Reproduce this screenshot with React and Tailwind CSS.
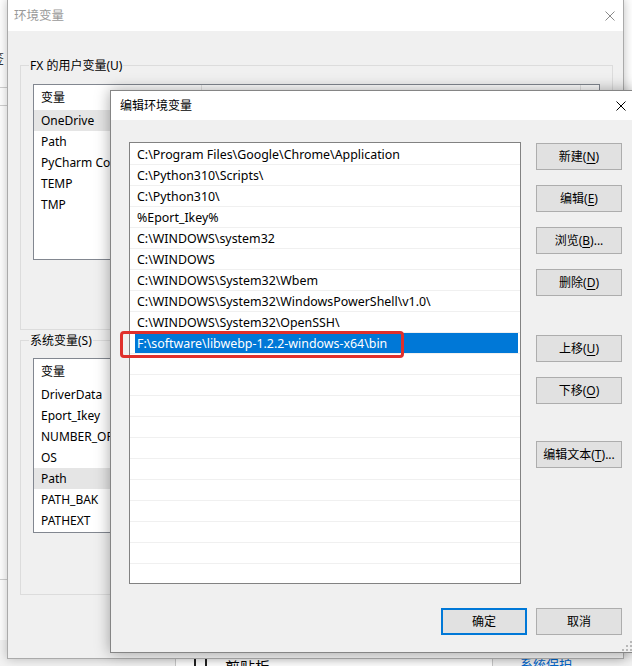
import React from 'react';

const userVars = ['OneDrive', 'Path', 'PyCharm Community Edition', 'TEMP', 'TMP'];
const sysVars = ['DriverData', 'Eport_Ikey', 'NUMBER_OF_PROCESSORS', 'OS', 'Path', 'PATH_BAK', 'PATHEXT'];
const paths = [
  'C:\\Program Files\\Google\\Chrome\\Application',
  'C:\\Python310\\Scripts\\',
  'C:\\Python310\\',
  '%Eport_Ikey%',
  'C:\\WINDOWS\\system32',
  'C:\\WINDOWS',
  'C:\\WINDOWS\\System32\\Wbem',
  'C:\\WINDOWS\\System32\\WindowsPowerShell\\v1.0\\',
  'C:\\WINDOWS\\System32\\OpenSSH\\',
];
const editing = 'F:\\software\\libwebp-1.2.2-windows-x64\\bin';

function CloseIcon({ color }) {
  return (
    <svg width="10" height="10" viewBox="0 0 10 10">
      <path d="M0.5 0.5 L9.5 9.5 M9.5 0.5 L0.5 9.5" stroke={color} strokeWidth="1" fill="none" />
    </svg>
  );
}

function VarList({ items, active, height }) {
  return (
    <div className={`ml-[12px] w-[567px] border border-[#828790] bg-white overflow-hidden ${height}`}>
      <div className="h-[25px] flex">
        <div className="w-[168px] border-r border-[#e5e5e5] pl-[7px] flex items-center">变量</div>
        <div className="w-[379px] border-r border-[#e5e5e5] pl-[7px] flex items-center">值</div>
      </div>
      {items.map((v, i) => (
        <div key={v + i} className={`h-[21px] flex ${i === active ? 'bg-[#e5e5e5]' : ''}`}>
          <div className="w-[168px] pl-[7px] flex items-center whitespace-nowrap overflow-hidden">{v}</div>
        </div>
      ))}
    </div>
  );
}

function Btn({ text, mnemonic, after = '', primary }) {
  return (
    <div
      className={`w-[86px] h-[27px] flex items-center justify-center bg-[#e1e1e1] ${
        primary ? 'border-2 border-[#0078d7]' : 'border border-[#adadad]'
      }`}
    >
      {text}
      {mnemonic && (
        <>
          (<span className="underline underline-offset-[2px]">{mnemonic}</span>){after}
        </>
      )}
    </div>
  );
}

export default function App() {
  return (
    <div className="relative w-[632px] h-[666px] overflow-hidden bg-white text-[12px] leading-[16px] text-black font-['Noto_Sans','Noto_Sans_CJK_SC',sans-serif]">
      {/* stuff behind the windows */}
      <div className="absolute left-[-9px] top-[50px] text-[13px] text-[#333]">签</div>
      <div className="absolute left-0 top-[87px] w-[7px] border-t border-[#d0d0d0]" />
      <div className="absolute left-0 top-[105px] w-[7px] border-t border-[#d0d0d0]" />
      <div className="absolute left-0 top-[579px] w-[7px] border-t border-[#d0d0d0]" />
      <div className="absolute left-0 top-[640px] w-[632px] h-[26px] bg-[#f3f3f3] flex">
        <div className="ml-[175px] w-[318px] h-full bg-white border-l border-r border-[#c8c8c8] flex items-end pl-[18px] gap-[18px]">
          <div className="w-[13px] h-[12px] border-2 border-b-0 border-[#222] mb-[-2px]" />
          <span className="text-[15px] mb-[-9px]">剪贴板</span>
        </div>
        <div className="ml-[27px] self-end mb-[-6px] text-[13px] text-[#0066cc]">系统保护</div>
      </div>

      {/* 环境变量 (inactive) */}
      <div className="absolute left-[7px] top-[-1px] w-[617px] h-[660px] border border-[#aaaaaa] bg-[#f0f0f0] shadow-[0_0_10px_rgba(0,0,0,0.25)]">
        <div className="h-[31px] bg-white flex items-center justify-between pl-[6px] pr-[8px] text-[#999999]">
          <span className="text-[12.5px]">环境变量</span>
          <CloseIcon color="#8a8a8a" />
        </div>
        <div className="pt-[26px] pl-[12px]">
          <fieldset className="w-[593px] border border-[#dcdcdc]">
            <legend className="ml-[8px] px-[1px] h-[17px] leading-[17px]">FX 的用户变量(U)</legend>
            <div className="mt-[10px] mb-[69px]">
              <VarList items={userVars} active={0} height="h-[176px]" />
            </div>
          </fieldset>
          <fieldset className="mt-[2px] w-[593px] border border-[#dcdcdc]">
            <legend className="ml-[8px] px-[1px] h-[17px] leading-[17px]">系统变量(S)</legend>
            <div className="mt-[9px] mb-[61px]">
              <VarList items={sysVars} active={4} height="h-[175px]" />
            </div>
          </fieldset>
        </div>
      </div>

      {/* 编辑环境变量 dialog */}
      <div className="absolute left-[110px] top-[90px] w-[524px] h-[563px] border border-[#858585] bg-[#f0f0f0] shadow-[0_0_14px_rgba(0,0,0,0.35)] flex flex-col">
        <div className="h-[29px] bg-white flex items-center justify-between pl-[9px] pr-[7px]">
          <span>编辑环境变量</span>
          <CloseIcon color="#000" />
        </div>
        <div className="flex pt-[22px] pl-[18px]">
          <div className="w-[392px] h-[442px] border border-[#828282] bg-white overflow-hidden pt-[1px] text-[12.4px]">
            {paths.map((p) => (
              <div key={p} className="h-[21px] border-b border-[#f0f0f0] pl-[7px] pt-[2px] flex items-center whitespace-nowrap">
                {p}
              </div>
            ))}
            <div className="h-[21px] border-b border-[#f0f0f0] pl-[5px] pr-[2px] flex">
              <div className="flex-1 bg-[#0078d7] text-white pl-[2px] pt-[1px] flex items-center whitespace-nowrap">{editing}</div>
            </div>
            {Array.from({ length: 11 }).map((_, i) => (
              <div key={i} className="h-[21px] border-b border-[#f0f0f0]" />
            ))}
          </div>
          <div className="ml-[15px] mt-[1px] flex flex-col">
            <Btn text="新建" mnemonic="N" />
            <div className="mt-[15px]"><Btn text="编辑" mnemonic="E" /></div>
            <div className="mt-[15px]"><Btn text="浏览" mnemonic="B" after="..." /></div>
            <div className="mt-[15px]"><Btn text="删除" mnemonic="D" /></div>
            <div className="mt-[39px]"><Btn text="上移" mnemonic="U" /></div>
            <div className="mt-[15px]"><Btn text="下移" mnemonic="O" /></div>
            <div className="mt-[37px]"><Btn text="编辑文本" mnemonic="T" after="..." /></div>
          </div>
        </div>
        <div className="mt-[24px] flex justify-end gap-[9px] pr-[11px]">
          <Btn text="确定" primary />
          <Btn text="取消" />
        </div>
        <div className="absolute left-[9px] top-[240px] w-[284px] h-[27px] border-[3px] border-[#e0302c] rounded-[4px]" />
        <svg className="absolute right-[1px] bottom-[1px]" width="11" height="11" viewBox="0 0 11 11">
          {[[9, 1], [9, 5], [5, 5], [9, 9], [5, 9], [1, 9]].map(([x, y]) => (
            <rect key={`${x}-${y}`} x={x} y={y} width="2" height="2" fill="#b8b8b8" />
          ))}
        </svg>
      </div>
    </div>
  );
}
